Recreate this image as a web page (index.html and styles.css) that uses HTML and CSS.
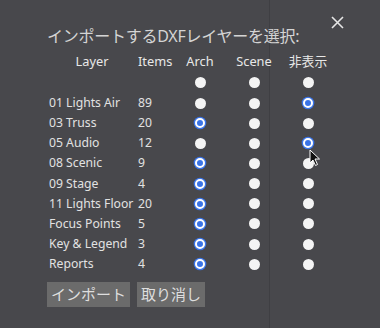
FILE: index.html
```html
<!DOCTYPE html>
<html lang="ja">
<head>
    <meta charset="UTF-8">
    <title>DXF Import</title>
    <link rel="stylesheet" href="styles.css">
</head>
<body>
    <div class="dialog">
        <button class="close" aria-label="close">
            <svg width="13" height="13" viewBox="0 0 13 13"><path d="M1 1L12 12M12 1L1 12" stroke="#e6e6e6" stroke-width="1.6"/></svg>
        </button>
        <h2 class="title">インポートするDXFレイヤーを選択:</h2>

        <div class="grid">
            <div class="head">Layer</div>
            <div class="head">Items</div>
            <div class="head">Arch</div>
            <div class="head">Scene</div>
            <div class="head">非表示</div>

            <div></div><div></div>
            <div class="cell"><span class="radio"></span></div>
            <div class="cell"><span class="radio"></span></div>
            <div class="cell"><span class="radio"></span></div>
        </div>
        <div class="grid" id="rows"></div>

        <div class="actions">
            <button class="btn">インポート</button>
            <button class="btn">取り消し</button>
        </div>
    </div>

    <svg class="cursor" width="12" height="18" viewBox="0 0 12 18"><path d="M1 1L1 14L4 11L6.5 16.5L8.5 15.5L6 10L10.5 10Z" fill="#111" stroke="#fff" stroke-width="1"/></svg>

    <script>
        // 0 = Arch, 1 = Scene, 2 = 非表示
        const layers = [
            { name: '01 Lights Air', items: 89, pick: 2 },
            { name: '03 Truss', items: 20, pick: 0 },
            { name: '05 Audio', items: 12, pick: 2 },
            { name: '08 Scenic', items: 9, pick: 0 },
            { name: '09 Stage', items: 4, pick: 0 },
            { name: '11 Lights Floor', items: 20, pick: 0 },
            { name: 'Focus Points', items: 5, pick: 0 },
            { name: 'Key & Legend', items: 3, pick: 0 },
            { name: 'Reports', items: 4, pick: 0 }
        ];

        const rows = document.getElementById('rows');
        layers.forEach(layer => {
            const name = document.createElement('div');
            name.className = 'name';
            name.textContent = layer.name;
            rows.appendChild(name);

            const items = document.createElement('div');
            items.className = 'name';
            items.textContent = layer.items;
            rows.appendChild(items);

            for (let i = 0; i < 3; i++) {
                const cell = document.createElement('div');
                cell.className = 'cell';
                const r = document.createElement('span');
                r.className = i === layer.pick ? 'radio on' : 'radio';
                cell.appendChild(r);
                rows.appendChild(cell);
            }
        });
    </script>
</body>
</html>
```

FILE: styles.css
```css
body {
    margin: 0;
    width: 380px;
    height: 328px;
    overflow: hidden;
    font-family: 'Noto Sans', 'Noto Sans CJK JP', sans-serif;
    color: #e2e2e2;
    background-color: #48484c;
    background-image: linear-gradient(to right, transparent 269px, #3f3f43 269px, #3f3f43 270px, transparent 270px);
    position: relative;
}
.dialog {
    padding: 26px 0 0 47px;
    position: relative;
}
.close {
    position: absolute;
    top: 16px;
    left: 331px;
    background: none;
    border: none;
    padding: 0;
    line-height: 0;
}
.title {
    margin: 0;
    font-size: 16px;
    font-weight: normal;
    line-height: 20px;
    color: #d4d4d4;
    letter-spacing: -0.25px;
}
.grid {
    display: grid;
    grid-template-columns: 90px 36px 54px 54px 54px;
    grid-auto-rows: 20.15px;
    font-size: 12.2px;
}
.grid:first-of-type {
    margin-top: 4px;
    grid-auto-rows: 22px 20px;
    font-size: 12.8px;
}
#rows {
    margin-top: 1px;
}
.head {
    text-align: center;
    line-height: 22px;
    color: #e8e8e8;
}
.head:nth-child(2) {
    text-align: left;
    padding-left: 1px;
}
.name {
    line-height: 20px;
    padding-left: 2px;
    white-space: nowrap;
    color: #e2e2e2;
}
.name:nth-child(5n+2) {
    padding-left: 1px;
}
.cell {
    display: flex;
    align-items: center;
    justify-content: center;
}
.radio {
    width: 11px;
    height: 11px;
    border-radius: 50%;
    background-color: #f4f4f4;
    box-sizing: border-box;
}
.radio.on {
    background-color: #3a74e8;
    border: 2px solid #fff;
    box-shadow: 0 0 0 1.3px #3a74e8;
    width: 10px;
    height: 10px;
}
.actions {
    display: flex;
    gap: 7px;
    margin-top: 8px;
}
.btn {
    font-family: 'Noto Sans', 'Noto Sans CJK JP', sans-serif;
    font-size: 15px;
    height: 25px;
    padding: 0 4px;
    line-height: 25px;
    border: none;
    background-color: #6b6b6b;
    color: #dedede;
}
.cursor {
    position: absolute;
    left: 309px;
    top: 149px;
}
```
